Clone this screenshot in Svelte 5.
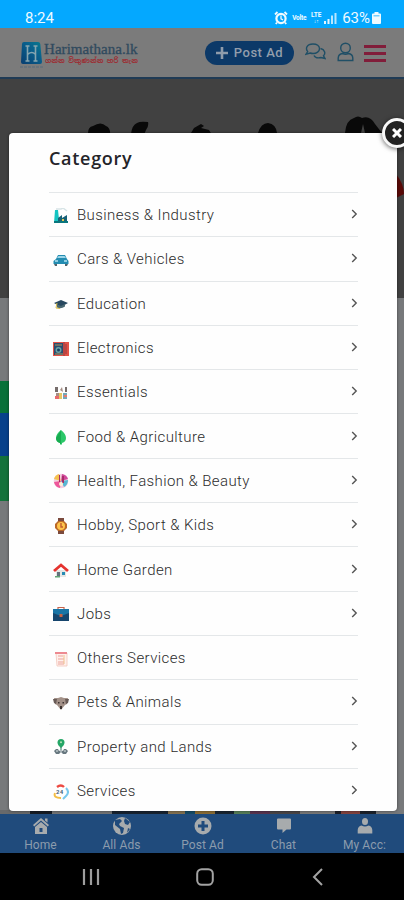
<script>
  const categories = [
    { name: 'Business & Industry', icon: 'factory' },
    { name: 'Cars & Vehicles', icon: 'car' },
    { name: 'Education', icon: 'cap' },
    { name: 'Electronics', icon: 'electronics' },
    { name: 'Essentials', icon: 'essentials' },
    { name: 'Food & Agriculture', icon: 'leaf' },
    { name: 'Health, Fashion & Beauty', icon: 'beauty' },
    { name: 'Hobby, Sport & Kids', icon: 'watch' },
    { name: 'Home Garden', icon: 'house' },
    { name: 'Jobs', icon: 'briefcase' },
    { name: 'Others Services', icon: 'list', leaf: true },
    { name: 'Pets & Animals', icon: 'dog' },
    { name: 'Property and Lands', icon: 'land' },
    { name: 'Services', icon: 'support' }
  ];
  const tabs = ['Home', 'All Ads', 'Post Ad', 'Chat', 'My Acc:'];
</script>

<div class="screen">
  <div class="status">
    <span class="clock">8:24</span>
    <div class="indicators">
      <svg width="14" height="14" viewBox="0 0 14 14"><circle cx="7" cy="7.5" r="4.600" fill="none" stroke="#effaff" stroke-width="2.200"/><path d="M1 3.5 3.5 1M13 3.5 10.5 1M3 11.5 1.8 13M11 11.5 12.2 13" stroke="#effaff" stroke-width="1.8"/><path d="M7 4.5v3.3l2 1" stroke="#effaff" stroke-width="1.3" fill="none"/></svg>
      <span class="volte">Volte</span>
      <span class="lte"><b>LTE</b><i>↓↑</i></span>
      <svg class="signal" width="13" height="12" viewBox="0 0 13 12"><path d="M0 9h2v3H0zM3.5 7h2v5h-2z" fill="#e2f5ff"/><path d="M7 3.5h2V12H7zM10.5 1h2v11h-2z" fill="#b6e6ff"/></svg>
      <span class="percent">63%</span>
      <svg width="9" height="12" viewBox="0 0 9 12"><path d="M2.5 0h4v1.5H8a1 1 0 0 1 1 1V11a1 1 0 0 1-1 1H1a1 1 0 0 1-1-1V2.500a1 1 0 0 1 1-1h1.500z" fill="#effaff"/><path d="M1.500 3h6v1.500h-6z" fill="#73cfff"/></svg>
    </div>
  </div>

  <header>
    <div class="logo">
      <svg width="25" height="29" viewBox="0 0 25 29"><defs><linearGradient id="lg" x1="0" y1="1" x2="1" y2="0"><stop offset="0" stop-color="#083d70"/><stop offset=".6" stop-color="#09608c"/><stop offset="1" stop-color="#087b8e"/></linearGradient></defs><path d="M4 1h14q2 0 2.300 2L22 21q0 2-2 2H3q-2 0-2-2L2 3q0-2 2-2z" fill="url(#lg)"/><path d="M7.500 5v15M15.500 5v15M8 13q4-3 7 0M5.500 5h4M13.500 5h4M5.500 20h4M13.500 20h4" stroke="#85a5b0" stroke-width="1.600" fill="none"/><path d="M0 26h24" stroke="#64717c" stroke-width="1.500" stroke-dasharray="3 1"/></svg>
      <div class="brand"><strong>Harimathana.lk</strong><em>ගන්න විකුණන්න හරි තැන</em></div>
    </div>
    <div class="post"><svg width="12" height="12" viewBox="0 0 12 12"><path d="M6 0v12M0 6h12" stroke="#8f9cab" stroke-width="2.600"/></svg><span>Post Ad</span></div>
    <svg class="chats" width="21" height="17" viewBox="0 0 21 17" fill="none" stroke="#204f66" stroke-width="1.400"><path d="M8 1c4 0 6.500 2 6.500 4.700S11.700 10.500 8 10.500c-1 0-2-.2-2.800-.5L1 11.200l1.700-2.600C.2 5.500 1.700 1 8 1z"/><path d="M15.500 5.500c4.500 1 5.300 5 3 7.300l1.500 2.700-4-1c-3 .8-6 0-7-2"/></svg>
    <svg class="user" width="17" height="20" viewBox="0 0 17 20" fill="none" stroke="#204f66" stroke-width="1.400"><circle cx="8.500" cy="6" r="4.800"/><path d="M5.500 11.500Q1.500 12 1.200 16v2.500h14.600V16q-.3-4-4.300-4.500-3 1.500-6 0z"/></svg>
    <div class="burger"><i></i><i></i><i></i></div>
  </header>

  <main>
    <div class="hero">
      <svg width="404" height="219" viewBox="0 0 404 219"><g fill="#090909"><path d="M88 54q0-6 5-7 8-5 13 0 5 2 4 10H88zM131 55q1-9 6-11 3-2 11-1 1 4-2 8l-2 5h-13zM191 54l3-5 7-4 3 2-3 2 8 2 3 5h-21zM258 54q3-10 10-10 8 1 9 10zM345 54q1-13 9-15 4-3 8 0 8-3 13 6l7 9h-17l-2-9-2 9z"/></g><path d="M396 95q8 10 8 20l-8 4z" fill="#590a08"/></svg>
    </div>
    <div class="side green"></div><div class="side blue"></div><div class="side green two"></div>
    <div class="strip"></div>
  </main>

  <nav>
    {#each tabs as tab, i}
      <div class="tab">
        <svg width="20" height="18" viewBox="0 0 20 18" fill="#a7abad">
          {#if i === 0}<path d="m10 1 8 7-1.200 1.400L10 3.600 3.200 9.400 2 8zM14 1.500h2.500v4L14 3.500zM4 10l6-5 6 5v7H4z"/><path d="M8.500 11h3v4h-3z" fill="#204b7c"/>
          {:else if i === 1}<circle cx="10" cy="9" r="9"/><path d="m3 3 5-1 2 2-3 3 1 2 4 2-1 5-2 1-1-5-5-4zM13 1l5 4-2 3-3-1-1-3zM16 11l2 1-3 4z" fill="#204b7c"/>
          {:else if i === 2}<circle cx="10" cy="9" r="8.500"/><path d="M10 4v10M5 9h10" stroke="#204b7c" stroke-width="3"/>
          {:else if i === 3}<path d="M4 1.500h12q1 0 1 1v9q0 1-1 1h-3.500L8.500 16v-3.500H4q-1 0-1-1v-9q0-1 1-1z"/>
          {:else}<ellipse cx="10" cy="4.500" rx="3" ry="3.500"/><path d="M6.500 8.500q3.500 2 7 0Q17 9 17.300 13v3.500H2.700V13Q3 9 6.500 8.500z"/>{/if}
        </svg>
        <span>{tab}</span>
      </div>
    {/each}
  </nav>

  <div class="system">
    <svg width="18" height="18" viewBox="0 0 18 18"><path d="M2 1v16M9 1v16M16 1v16" stroke="#9d9d9d" stroke-width="2.200"/></svg>
    <svg width="18" height="18" viewBox="0 0 18 18"><rect x="1.200" y="1.200" width="15.600" height="15.600" rx="4.500" fill="none" stroke="#a3a3a3" stroke-width="2"/></svg>
    <svg width="18" height="18" viewBox="0 0 18 18"><path d="M13 1 5 9l8 8" fill="none" stroke="#a3a3a3" stroke-width="2"/></svg>
  </div>

  <section class="modal">
    <h2>Category</h2>
    <ul>
      {#each categories as c}
        <li>
          <svg class="icon" width="16" height="16" viewBox="0 0 16 16">
            {#if c.icon === 'factory'}<path d="M2 2h3l1 9h8v4H1z" fill="#15c4c2"/><path d="M5 10 9 7v3l5-3v7H5z" fill="#176176"/><path d="M1 13h14v2H1z" fill="#0a767d"/><path d="M3 1h5l2-1 4 3" stroke="#d7e4e6" stroke-width="1.500" fill="none"/><path d="M9 11h2v2H9z" fill="#e8c951"/>
            {:else if c.icon === 'car'}<path d="m3 7 2-4h7l2 4 1.500 2v3H.5V9z" fill="#238cb1"/><path d="m4 6 1.500-2h6L13 6z" fill="#9cd5e8"/><path d="M1 12h3v2H2zM12 12h3l-1 2h-2z" fill="#52636b"/><path d="M2 9h3M11 9h3" stroke="#b1e0f0" stroke-width="1.500"/>
            {:else if c.icon === 'cap'}<path d="m1 7 7-3 7 3-7 4z" fill="#27485f"/><path d="M4 8.500v3q4 2 8-1V8L8 10z" fill="#4a6872"/><path d="m4 7-1 5 4 .5" stroke="#dbbc49" fill="none"/>
            {:else if c.icon === 'electronics'}<path d="M0 1h16v14H0z" fill="#e25145"/><path d="M1 2h9v12H1z" fill="#294e70"/><path d="M11 1v14M13 3v10" stroke="#903d42"/><circle cx="5.500" cy="9" r="3" fill="#6aa2a4"/><circle cx="5.500" cy="9" r="1.500" fill="#173f62"/><path d="M2 4h7M2 13h8" stroke="#b89256"/>
            {:else if c.icon === 'essentials'}<path d="M2 2h3v5H2zM12 2h2v5h-2z" fill="#766d6b"/><path d="m7 5 2-3 1 5M3 8h3v3H3z" fill="#a58d84"/><path d="M2 11h4v3H2z" fill="#e9696b"/><path d="M6 8h3v6H6z" fill="#e6c764"/><path d="M10 8h4v6h-4z" fill="#76a8b7"/><path d="M11 10h3v2h-3z" fill="#e77a70"/>
            {:else if c.icon === 'leaf'}<path d="M8 1q5 4 5 8 0 4-4 5v1.500H7V14q-4-1-4-5 0-4 5-8z" fill="#2bc768"/><path d="M8 1v14H7v-1Q3 13 3 9z" fill="#18ac51"/>
            {:else if c.icon === 'beauty'}<circle cx="8" cy="8" r="7.300" fill="#f3cfe0"/><path d="M8 8 1 6q1-4 5-5z" fill="#f5c24e"/><path d="m8 8 1-7q5 1 6 5z" fill="#d0489b"/><path d="m8 8 7-1q0 5-4 7z" fill="#57b7d2"/><path d="M8 8 1 9q1 5 6 6z" fill="#ee579b"/><path d="M6 2h1v7H6zM9 3h2v7H9z" fill="#a82d66"/><circle cx="8" cy="11" r="2" fill="#fff0d6"/>
            {:else if c.icon === 'watch'}<path d="M5 0h6v4H5zM5 12h6v4H5z" fill="#7b4a3d"/><path d="m5 3-3 3v4l3 3h6l3-3V6l-3-3z" fill="#ba6828"/><circle cx="8" cy="8" r="4" fill="#ffc54c"/><path d="M8 5v4h2" stroke="#c35d30" stroke-width="1.400" fill="none"/>
            {:else if c.icon === 'house'}<path d="M3 8h10v7H3z" fill="#e6e7e5"/><path d="m1 9 7-6 7 6" stroke="#e5332f" stroke-width="2.800" fill="none"/><path d="M4 10h3v5H4z" fill="#63737c"/><path d="M9 10h3v3H9z" fill="#268bb4"/><path d="M2 14h5v1.500H2z" fill="#62a776"/>
            {:else if c.icon === 'briefcase'}<path d="M5 3V1.500h6V3" fill="none" stroke="#c7654d" stroke-width="1.200"/><path d="M0 3h16v12H0z" fill="#16456d"/><path d="M0 3h16v4l-8 3-8-3z" fill="#1974a5"/><path d="M6.500 8h3v3h-3z" fill="#cb6243"/>
            {:else if c.icon === 'list'}<path d="M3 2h11v13H4z" fill="#fff0ec" stroke="#f2c6bb" stroke-width=".8"/><path d="M2 1h12v2H2z" fill="#ed8990"/><path d="M5 5h5M5 8h6M5 11h6M5 13h6" stroke="#eba49c" stroke-width="1.200"/><path d="M11 4v9" stroke="#efc28b"/>
            {:else if c.icon === 'dog'}<path d="M1 3h4l3-1 3 1h4l-1 6-2 1-4 5-4-5-2-1z" fill="#a39188"/><path d="M0 4h4l-1 5-2-1zM16 4h-4l1 5 2-1z" fill="#685b57"/><path d="M5 7h1.500v1.500H5zM9.500 7H11v1.500H9.500zM7 11h2v3H7z" fill="#3c3330"/>
            {:else if c.icon === 'land'}<path d="M8 0q3.500 0 3.500 3.500Q11.500 6 8 9 4.500 6 4.500 3.500 4.500 0 8 0z" fill="#24a666"/><circle cx="8" cy="3.300" r="1" fill="#b9e3b9"/><path d="M8 8v3" stroke="#24795c"/><path d="m1 12 2-2h2l1 2 2-1 2 1 1-2h2l2 2-2 3h-3l-2-2-2 2H3z" fill="#687880"/><path d="M3 12h2M7 12h2M11 12h2" stroke="#dce5e5"/>
            {:else}<path d="M4 3q4-3 7 0" stroke="#ed4a42" stroke-width="2.400" fill="none"/><path d="M13 4q4 4 0 8l-3 3" stroke="#78c9ed" stroke-width="2" fill="none"/><path d="M2 9q-2 5 6 5" stroke="#f3be46" stroke-width="2" fill="none"/><text x="3" y="10" font-size="6" font-weight="bold" fill="#44627b" font-family="Roboto, sans-serif">24</text>{/if}
          </svg>
          <span>{c.name}</span>
          {#if !c.leaf}<svg class="chev" width="7" height="10" viewBox="0 0 7 10"><path d="m1.200 1 4 4-4 4" stroke="#555" stroke-width="1.400" fill="none"/></svg>{/if}
        </li>
      {/each}
    </ul>
  </section>
  <div class="close"><svg width="10" height="10" viewBox="0 0 10 10"><path d="m1 1 8 8M9 1 1 9" stroke="#fff" stroke-width="3"/></svg></div>
</div>

<style>
  .screen { position: relative; width: 404px; height: 900px; overflow: hidden; display: flex; flex-direction: column; font-family: Roboto, "Liberation Sans", sans-serif; background: #77797b; }
  .status { height: 28px; flex: none; background: #04a8ff; color: #effaff; display: flex; align-items: center; justify-content: space-between; padding: 7px 23px 0 25px; box-sizing: border-box; }
  .clock { font-size: 15px; line-height: 20px; }
  .indicators { display: flex; align-items: center; }
  .volte { font-size: 6.500px; font-weight: 700; margin-left: 4px; width: 16px; letter-spacing: -.2px; }
  .lte { display: flex; flex-direction: column; align-items: center; font-size: 6.500px; line-height: 6px; margin-left: 2px; width: 12px; }
  .lte i { font-size: 5px; font-style: normal; }
  .signal { margin: 0 5px 0 2px; }
  .percent { font-size: 15px; line-height: 20px; margin-right: 2px; }
  header { height: 51px; flex: none; box-sizing: border-box; border-bottom: 2px solid #203b55; background: #7b7b7b; display: flex; align-items: center; padding: 0 18px 0 20px; }
  .logo { display: flex; width: 185px; flex: none; padding-top: 5px; }
  .logo svg { flex: none; }
  .brand { display: flex; flex-direction: column; color: #304a5e; margin-left: -1px; }
  .brand strong { font: 400 15px/16px "Liberation Serif", serif; letter-spacing: .05px; -webkit-text-stroke: .3px #304a5e; }
  .brand em { font: normal 700 6.900px/8px "Noto Sans Sinhala", "Noto Sans", sans-serif; color: #9b3036; white-space: nowrap; margin-left: 1px; }
  .post { width: 89px; height: 24px; flex: none; border-radius: 12px; background: #0c3968; color: #929eac; display: flex; align-items: center; justify-content: center; gap: 6px; font-size: 13px; font-weight: 500; letter-spacing: .5px; }
  .chats { margin-left: 11px; margin-top: -2px; flex: none; }
  .user { margin-left: 11px; margin-top: -2px; flex: none; }
  .burger { display: flex; flex-direction: column; gap: 4px; margin-left: 10px; width: 22px; padding-top: 1px; }
  .burger i { height: 3px; background: #811d3a; }
  main { height: 735px; flex: none; display: flex; flex-direction: column; }
  .hero { height: 219px; background: #414141; margin-bottom: 83px; }
  .hero svg { display: block; }
  .side { width: 10px; height: 32px; background: #087139; }
  .side.blue { height: 43px; background: #07418b; }
  .side.two { height: 45px; background: #14723b; }
  .strip { height: 4px; margin-top: auto; background: linear-gradient(90deg, #696a6b 30px, #171d25 30px 52px, #737475 52px 112px, #182330 112px 168px, #827050 168px 185px, #154b67 185px 195px, #8a6c34 195px 215px, #192531 215px 234px, #557d58 234px 250px, #58334f 250px 270px, #4a4546 270px 300px, #777 300px 335px, #1d2028 335px 341px, #82423e 341px 360px, #1c222b 360px 376px, #77797b 376px); }
  nav { height: 39px; flex: none; background: #204b7c; display: flex; color: #8c9cad; }
  .tab { width: 81px; flex: none; display: flex; flex-direction: column; align-items: center; padding-top: 3px; font-size: 12px; line-height: 18px; box-sizing: border-box; }
  .tab svg { width: 20px; height: 18px; flex: none; }
  .tab span { letter-spacing: .1px; line-height: 18px; padding-top: 1px; }
  .system { height: 47px; flex: none; background: #000; display: flex; align-items: center; justify-content: space-between; padding: 0 77px 0 82px; }
  .modal { position: absolute; left: 9px; top: 133px; width: 388px; height: 678px; box-sizing: border-box; padding: 0 39px 0 40px; background: #fefefe; border-radius: 4px; overflow: hidden; box-shadow: 0 0 3px rgba(0,0,0,.5); }
  h2 { margin: 0; height: 59px; padding-top: 13px; box-sizing: border-box; font: 600 18px/24px "Open Sans", sans-serif; letter-spacing: .7px; color: #242429; }
  ul { list-style: none; margin: 0; padding: 0; }
  li { height: 44.300px; box-sizing: border-box; border-top: 1px solid #e4e7e9; display: flex; align-items: center; color: #2c2c2c; font-weight: 300; font-size: 15px; letter-spacing: .4px; white-space: nowrap; }
  li span { padding-top: 1px; }
  .icon { width: 16px; height: 16px; margin: 2px 8px 0 4px; flex: none; }
  .chev { margin: -1px 0 0 auto; }
  .close { position: absolute; left: 382px; top: 118px; width: 30px; height: 30px; box-sizing: border-box; border: 3px solid #f8f8f8; border-radius: 50%; background: #222; display: flex; align-items: center; justify-content: center; box-shadow: 0 1px 5px rgba(0,0,0,.6); }
</style>
